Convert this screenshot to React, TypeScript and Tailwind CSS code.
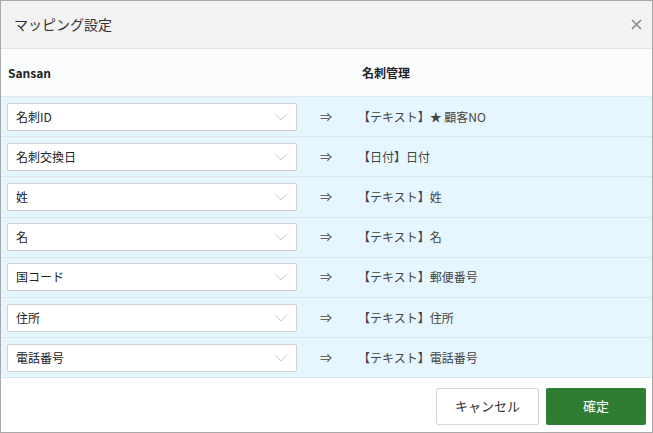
import React from 'react';

const rows: [string, string][] = [
  ['名刺ID', '【テキスト】★ 顧客NO'],
  ['名刺交換日', '【日付】日付'],
  ['姓', '【テキスト】姓'],
  ['名', '【テキスト】名'],
  ['国コード', '【テキスト】郵便番号'],
  ['住所', '【テキスト】住所'],
  ['電話番号', '【テキスト】電話番号'],
];

const font = { fontFamily: '"Noto Sans CJK JP", "Noto Sans", sans-serif' };

const Chevron = () => (
  <svg width="14" height="8" viewBox="0 0 14 8" fill="none" stroke="#c8c8c8" strokeWidth="1">
    <path d="M1 1l6 6 6-6" />
  </svg>
);

export default function App() {
  return (
    <div className="w-[653px] h-[433px] bg-white border border-[#a9a9a9] flex flex-col text-[#333]" style={font}>
      <div className="h-[48px] shrink-0 bg-[#f2f2f2] border-b border-[#e2e2e2] flex items-center justify-between pl-[13px] pr-[10px]">
        <span className="text-[14px] text-[#333]">マッピング設定</span>
        <svg width="11" height="11" viewBox="0 0 11 11" stroke="#8a8a8a" strokeWidth="1.6">
          <path d="M1 1l9 9M10 1l-9 9" />
        </svg>
      </div>

      <div className="h-[48px] shrink-0 bg-[#fafcfd] border-b border-[#dfe9ee] flex items-center text-[12px] font-bold text-[#222]">
        <span className="pl-[7px] w-[361px]">Sansan</span>
        <span>名刺管理</span>
      </div>

      {rows.map(([left, right]) => (
        <div key={left} className="h-[40.2px] shrink-0 bg-[#e6f6fe] border-b border-[#d9e6ec] flex items-center text-[12px]">
          <div className="ml-[6px] w-[290px] h-[28px] bg-white border border-[#d0d0d0] rounded-[2px] flex items-center justify-between pl-[8px] pr-[8px] text-[#222]">
            <span>{left}</span>
            <Chevron />
          </div>
          <span className="ml-[23px] w-[38px] text-[#444]">⇒</span>
          <span className="text-[#444]">{right}</span>
        </div>
      ))}

      <div className="flex-1 flex items-center justify-end gap-[7px] pr-[6px] pt-[2px]">
        <button className="w-[103px] h-[37px] bg-white border border-[#d5d5d5] rounded-[2px] text-[13px] text-[#333]">
          キャンセル
        </button>
        <button className="w-[100px] h-[37px] bg-[#2e7d32] rounded-[2px] text-[13px] text-white">
          確定
        </button>
      </div>
    </div>
  );
}
